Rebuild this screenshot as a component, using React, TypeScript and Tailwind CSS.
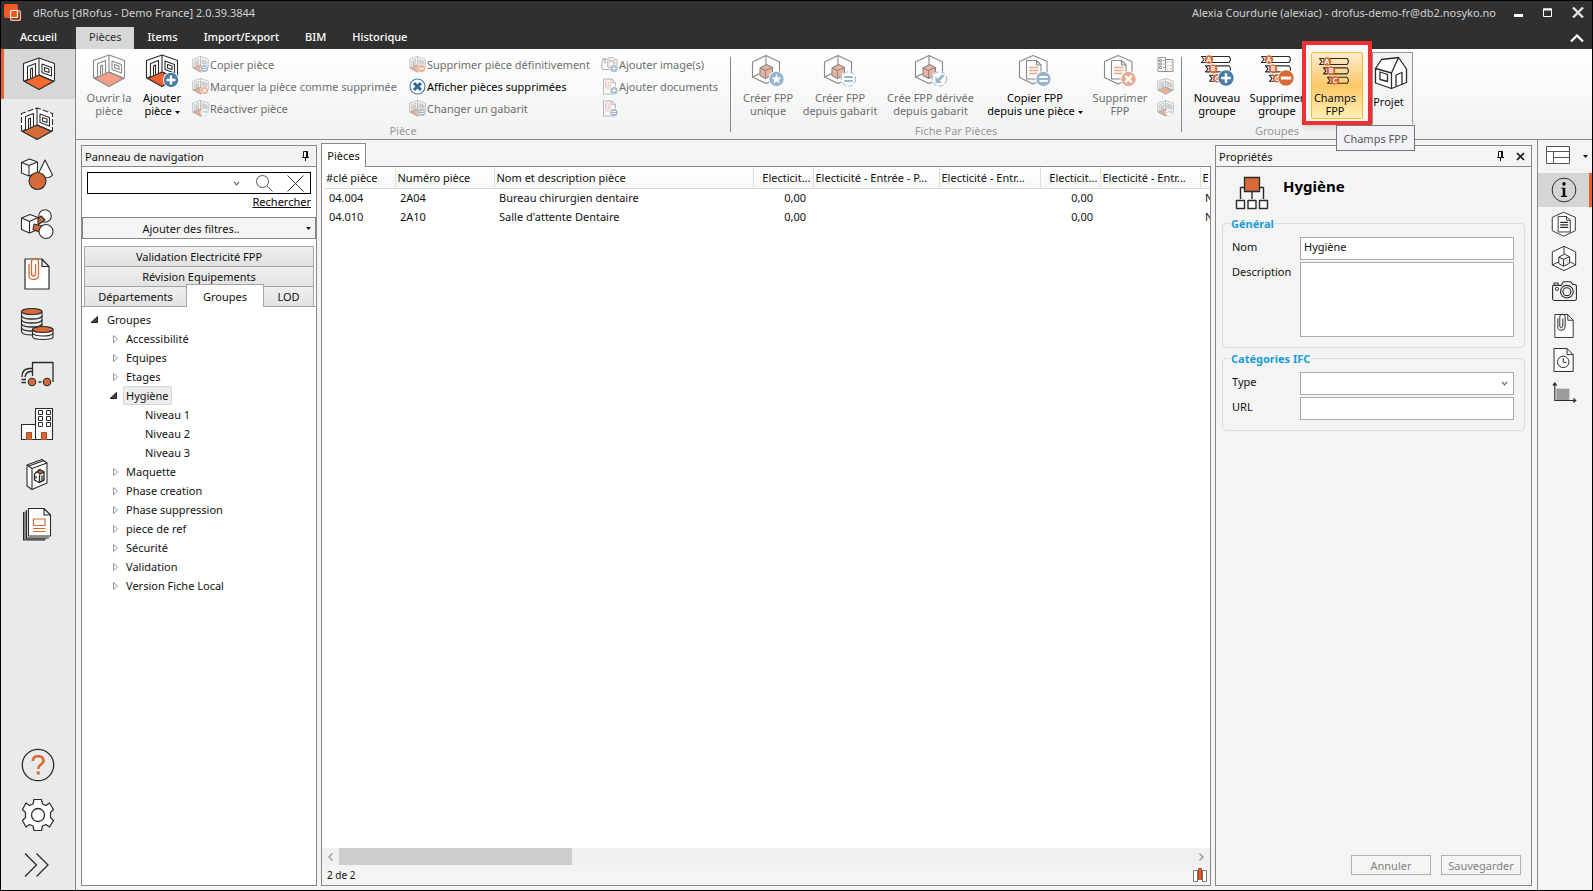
import { useState } from 'react';
import type { ReactNode } from 'react';
import clsx from 'clsx';

const ORANGE = '#d66a38';
const BLUE = '#4a7ba7';
const INK = '#2b2b2b';

type BadgeKind = 'plus' | 'minus' | 'x' | 'star' | 'equal' | 'equalOutline' | 'arrow' | 'refresh' | 'swap';

/* ---------- icons ---------- */

function Badge({ kind, cx = 24, cy = 24, r = 7.5 }: { kind: BadgeKind; cx?: number; cy?: number; r?: number }) {
  const outline = kind === 'equalOutline' || kind === 'arrow' || kind === 'refresh';
  const fill = kind === 'minus' || kind === 'x' ? ORANGE : BLUE;
  const mark = outline ? BLUE : '#fff';
  return (
    <g transform={`translate(${cx} ${cy}) scale(${r / 7.5})`} strokeLinecap="butt">
      <circle r="8" fill="#fff" stroke="none" />
      <circle r="7.2" fill={outline ? '#fff' : fill} stroke={outline ? BLUE : 'none'} strokeWidth="1" strokeDasharray={outline ? '5 2' : undefined} />
      {kind === 'plus' && <path d="M-4.5 0H4.5M0-4.5V4.5" stroke={mark} strokeWidth="2.4" />}
      {kind === 'minus' && <path d="M-4.8 0H4.8" stroke={mark} strokeWidth="2.8" />}
      {kind === 'x' && <path d="M-3.3-3.3L3.3 3.3M3.3-3.3L-3.3 3.3" stroke={mark} strokeWidth="2.4" />}
      {kind === 'star' && <path d="M0-5L1.4-1.6 5-1.4 2.2 .9 3.1 4.4 0 2.4-3.1 4.4-2.2 .9-5-1.4-1.4-1.6Z" fill={mark} stroke="none" />}
      {(kind === 'equal' || kind === 'equalOutline') && <path d="M-4.2-2H4.2M-4.2 2H4.2" stroke={mark} strokeWidth="2" />}
      {kind === 'arrow' && <><path d="M4-4L-1 1" stroke={mark} strokeWidth="3" /><path d="M-4-2.5V4H2.5Z" fill={mark} stroke="none" /></>}
      {kind === 'refresh' && <path d="M-4 1C-3-4 3-4 4 0M1 0H4.500V-3.500" stroke={mark} strokeWidth="1.6" fill="none" />}
      {kind === 'swap' && <path d="M-5-2H4M1-4.500 4-2M5 2H-4M-1 4.500L-4 2" stroke={mark} strokeWidth="1.5" fill="none" />}
    </g>
  );
}

function Svg({ size = 34, box = 34, className, children }: { size?: number; box?: number; className?: string; children: ReactNode }) {
  return (
    <svg width={size} height={size} viewBox={`0 0 ${box} ${box}`} fill="none" stroke={INK} strokeWidth="1.1" strokeLinejoin="round" aria-hidden="true" className={clsx('shrink-0', className)}>
      {children}
    </svg>
  );
}

function RoomIcon({ size = 34, badge, floor = ORANGE, dashed }: { size?: number; badge?: BadgeKind; floor?: string; dashed?: boolean }) {
  return (
    <Svg size={size}>
      <path d="M17 1L32.500 6.500V24L17 33 1.500 24V6.500Z" fill="#fff" stroke="none" />
      <path d="M17 18L31.500 24.500 17 32.500 2.500 24.500Z" fill={floor} />
      <path d="M1.500 24V6.500L17 1 32.500 6.500V24" strokeDasharray={dashed ? '6 2' : undefined} />
      <path d="M17 1V18M1.500 24.500L5.500 22.500V9.500L13.500 6.500V19.500M8.500 21.500V12L10.500 11V20.500M20 7L29.500 10.500V19L20 15.500ZM22.500 10.500L27 12V15.500L22.500 14ZM17 18L32.500 24.500" />
      {badge && <Badge kind={badge} cx={size < 20 ? 25 : 26} cy={size < 20 ? 25 : 26} />}
    </Svg>
  );
}

function HexCubeIcon({ badge, size = 34, fill = '#dd7a55' }: { badge?: BadgeKind; size?: number; fill?: string }) {
  return (
    <Svg size={size} box={badge ? 34 : 30}>
      <path d="M15 1.500L28.500 8V23L15 29.500 1.500 23V8Z" fill="#fff" />
      <path d="M15 1.500V11M1.500 23L9 19.500M28.500 23L22 19.500" />
      <path d="M9 14L15.500 10.500 21.500 13.500V21L14.500 24.500 9 21.500Z" fill={fill} />
      <path d="M9 14L14.500 16.500 21.500 13.500M14.500 16.500V24.500" />
      {badge && <Badge kind={badge} cx={25.5} cy={25} />}
    </Svg>
  );
}

function HexDocIcon({ badge, size = 34, lines = ORANGE }: { badge?: BadgeKind; size?: number; lines?: string }) {
  return (
    <Svg size={size} box={badge ? 34 : 31}>
      <path d="M15 1.500L29 7.500V23.500L15 30 1.500 23.500V7.500Z" fill="#fff" />
      <path d="M8.500 6.500H18.500L23 11V25H8.500ZM18.500 6.500V11H23" fill="#fff" />
      <path d="M11 13.500H20.500M11 16.500H20.500M11 19.500H20.500" stroke={lines} strokeWidth="1.4" />
      {badge && <Badge kind={badge} cx={25.5} cy={25} />}
    </Svg>
  );
}

function FieldsIcon({ badge }: { badge?: BadgeKind }) {
  return (
    <Svg>
      {['A', 'B', 'C'].map((letter, i) => (
        <g key={letter} transform={`translate(${i * 4} ${i * 9.4})`}>
          <path d="M6 2.500H1.500L4 5.500 1.500 8.500H6" />
          <path d={`M11 2.500H${29 - i * 4}Q${32 - i * 4} 5.500 ${29 - i * 4} 8.500H11`} />
          <circle cx="9" cy="5.500" r="4.300" fill={ORANGE} stroke="none" />
          <text x="9" y="8" fontSize="7" fontWeight="bold" textAnchor="middle" fill="#fff" stroke="none">{letter}</text>
        </g>
      ))}
      {badge && <Badge kind={badge} cx={26} cy={24} r={8} />}
    </Svg>
  );
}

function HouseIcon() {
  return (
    <Svg>
      <path d="M1.500 12.500L7.500 3.500 24.500 1.500 32.500 13V26.500L17.500 32.500 1.500 27Z" fill="#fff" strokeWidth="1.300" />
      <path d="M1.500 12.500L17.500 17 24.500 1.500M17.500 17V32.500M6 16L13.500 18.500V25.500L6 23.500ZM22 30.500V19L28 16.500V28.500" strokeWidth="1.300" />
    </Svg>
  );
}

function PaperclipDoc({ size = 34, clip = ORANGE, badge }: { size?: number; clip?: string; badge?: BadgeKind }) {
  return (
    <Svg size={size}>
      <path d="M5 2H22L29 9.500V32H5ZM22 2V9.500H29" fill="#fff" strokeWidth="1.2" />
      <path d="M15.500 7V17Q15.500 19 13.500 19T11.500 17V5Q11.500 1.500 15 1.500T18.500 5V18Q18.500 22.500 13.500 22.500T9 18V7" stroke={clip} strokeWidth="1.3" />
      {badge && <Badge kind={badge} cx={26} cy={25} />}
    </Svg>
  );
}

function CameraIcon({ size = 28, badge }: { size?: number; badge?: BadgeKind }) {
  return (
    <Svg size={size}>
      <path d="M3 8H13L15.500 3.500H25L27.500 7H30Q32 7 32 9V25Q32 27 30 27H4Q2 27 2 25V10Q2 8 3 8ZM4 8V5H9V8" fill={badge ? '#fff' : 'none'} strokeWidth="1.4" />
      <circle cx="20" cy="16" r="8" strokeWidth="1.400" />
      <circle cx="20" cy="16" r="5" strokeWidth="1.400" stroke={badge ? ORANGE : INK} />
      <circle cx="7.500" cy="12.500" r="2" />
      {badge && <Badge kind={badge} cx={26} cy={25} />}
    </Svg>
  );
}

function HiddenRoomsIcon() {
  return (
    <Svg size={17}>
      <circle cx="17" cy="17" r="15" fill="#fff" stroke={BLUE} strokeWidth="2.4" />
      <path d="M10 10L24 24M24 10L10 24" stroke="#2f6797" strokeWidth="6" />
    </Svg>
  );
}

function CompareIcon() {
  return (
    <Svg size={17}>
      <path d="M2 3H17V31H2ZM17 7H32V31H17Z" fill="#fff" strokeWidth="2" />
      <path d="M5 7H9V11H5ZM5 14H9V18H5ZM5 21H9V25H5ZM12 9H15M12 16H15M12 23H15" strokeWidth="2" />
      <path d="M20 12H23M26 12H30M20 19H23M26 19H30M20 26H23M26 26H30" stroke={ORANGE} strokeWidth="2.500" />
    </Svg>
  );
}

const Caret = () => (
  <svg width="5" height="3" viewBox="0 0 5 3" aria-hidden="true" className="inline-block shrink-0 align-middle"><path d="M0 0H5L2.500 3Z" fill="#111" /></svg>
);

const Chevron = () => (
  <svg width="7" height="5" viewBox="0 0 7 5" fill="none" stroke="#666" strokeWidth="1.200" aria-hidden="true"><path d="M1 .8L3.500 3.800 6 .8" /></svg>
);

const PinIcon = () => (
  <svg width="7" height="10" viewBox="0 0 7 10" fill="none" stroke="#111" aria-hidden="true"><path d="M1.500 6.500V.5H5.500V6.500M0 6.500H7M3.500 7V10" /><path d="M5 .5V6.500" strokeWidth="2" /></svg>
);

const CloseIcon = () => (
  <svg width="9" height="9" viewBox="0 0 9 9" stroke="#111" strokeWidth="1.700" aria-hidden="true"><path d="M1 1L8 8M8 1L1 8" /></svg>
);

/* ---------- left bar ---------- */

const modules: { label: string; icon: ReactNode }[] = [
  { label: 'Pièces', icon: <RoomIcon floor="#f4692f" /> },
  { label: 'Gabarits', icon: <RoomIcon dashed /> },
  {
    label: 'Items',
    icon: (
      <Svg>
        <path d="M1.500 5.500L9.500 2 17.500 5V15.500L9 19 1.500 16ZM1.500 5.500L9 8.500 17.500 5M9 8.500V19" fill="#fff" />
        <path d="M25 3L17.500 18.500Q19 21.500 25 21T32.500 18Z" fill="#fff" />
        <circle cx="17.500" cy="24" r="8.500" fill={ORANGE} />
      </Svg>
    ),
  },
  {
    label: 'Systèmes',
    icon: (
      <Svg>
        <circle cx="25" cy="9" r="6.300" fill="#fff" />
        <path d="M14 15L21 9 25 13 16 19Z" fill={ORANGE} />
        <path d="M1.500 11L10 7.500 18 10.500V22.500L9.500 26 1.500 22.500ZM1.500 11L9.500 14.500 18 10.500M9.500 14.500V26" fill="#fff" />
        <path d="M14 17L22 19 20.500 25.500 13 22.500Z" fill={ORANGE} />
        <circle cx="26" cy="24.500" r="7" fill="#fff" />
      </Svg>
    ),
  },
  { label: 'Documents', icon: <PaperclipDoc /> },
  {
    label: 'Finances',
    icon: (
      <Svg>
        <path d="M1.500 4.500V24.500Q1.500 28 12 28T22 24.500V4.500" fill="#e8ebea" />
        <path d="M1.500 9Q3 12 12 12T22 9M1.500 13Q3 16 12 16T22 13M1.500 17Q3 20 12 20T22 17M1.500 21Q3 24 12 24T22 21" strokeWidth="1.300" />
        <ellipse cx="11.750" cy="4.500" rx="10.250" ry="3" fill={ORANGE} />
        <path d="M12.500 22.500V29.500Q12.500 32.500 23 32.500T33 29.500V22.500" fill="#fff" />
        <path d="M12.500 26Q14 29 23 29T33 26" />
        <ellipse cx="22.750" cy="22.500" rx="10.250" ry="3" fill={ORANGE} />
      </Svg>
    ),
  },
  {
    label: 'Logistique',
    icon: (
      <Svg>
        <path d="M12.500 19V5.500H33V25M12.500 11.500H9Q2 12 2 20M12.500 14.500H10Q6 15 5 20M1.500 22.500H6M1.500 25.500H6M18.500 25H21.500" strokeWidth="1.300" />
        <circle cx="12" cy="25" r="3.700" fill={ORANGE} />
        <circle cx="27" cy="25" r="3.700" fill={ORANGE} />
      </Svg>
    ),
  },
  {
    label: 'Bâtiments',
    icon: (
      <Svg>
        <path d="M1.500 17.500H15.500V32.500H1.500ZM15.500 1.500H32.500V32.500H15.500Z" fill="#fff" />
        <path d="M18.500 3.500H22.500V7.500H18.500ZM26.500 3.500H30.500V7.500H26.500ZM18.500 9.500H22.500V13.500H18.500ZM26.500 9.500H30.500V13.500H26.500ZM18.500 15.500H22.500V19.500H18.500ZM26.500 15.500H30.500V19.500H26.500Z" strokeWidth="1" />
        <path d="M6.500 32.500V25.500H11.500V32.500ZM21.500 32.500V25.500H26.500V32.500Z" fill={ORANGE} stroke="#b04f22" />
      </Svg>
    ),
  },
  {
    label: 'Catalogue',
    icon: (
      <Svg>
        <path d="M7 8L22 2.500 27 6V26L12 32.500 7 29Z" fill="#fff" />
        <path d="M7 8L12 11.500 27 6M12 11.500V32.500M9 9L24 3.500" />
        <path d="M14.500 17L19 13 24 15V23L19 25.500 14.500 23Z" fill="#fff" strokeWidth="1.400" />
        <path d="M17 15L20 12.500 24 15 20.500 17Z" fill={ORANGE} />
        <path d="M19.500 17.500V25M16 19V21.500M22 18.500V23" strokeWidth="1.300" />
      </Svg>
    ),
  },
  {
    label: 'Rapports',
    icon: (
      <Svg>
        <path d="M5 4.500V32H26" stroke="#888" strokeWidth="2" />
        <path d="M6.500 3V31H29M3.500 5V33H25" />
        <path d="M8.500 1.500H24L30.500 8V29H8.500ZM24 1.500V8H30.500" fill="#fff" />
        <path d="M13.500 12H25V18.500H13.500ZM13 21.500H25.500M13 24.500H25.500" stroke={ORANGE} strokeWidth="1.200" />
      </Svg>
    ),
  },
];

const tools: { label: string; icon: ReactNode }[] = [
  {
    label: 'Aide',
    icon: (
      <Svg>
        <circle cx="17" cy="17" r="15.700" strokeWidth="1.300" />
        <path d="M11.800 13C11.800 9.500 14 8.200 17 8.200S22.500 9.500 22.500 12.700C22.500 16.500 17.200 16.200 17.200 21" stroke={ORANGE} strokeWidth="2.600" />
        <path d="M15.700 23.500H18.700V26.500H15.700Z" fill={ORANGE} stroke="none" />
      </Svg>
    ),
  },
  {
    label: 'Paramètres',
    icon: (
      <Svg>
        <path d="M13 1.500H20.500L21.500 6 25 7.500 28.500 5 32.500 11.500 29.500 14.500V19.500L32.500 22.500 28.500 29 25 26.500 21.500 28 20.500 32.500H13L12 28 8.500 26.500 5 29 1.500 22.500 4.500 19.500V14.500L1.500 11.500 5 5 8.500 7.500 12 6Z" fill="#fff" strokeWidth="1.200" />
        <circle cx="17" cy="17" r="6.500" strokeWidth="1.300" />
      </Svg>
    ),
  },
  {
    label: 'Développer',
    icon: (
      <Svg>
        <path d="M4 5.500L15.500 17 4 28.500M15.500 5.500L27 17 15.500 28.500" strokeWidth="1.300" strokeLinejoin="miter" />
      </Svg>
    ),
  },
];

function SideBar() {
  const [active, setActive] = useState(0);
  return (
    <nav className="flex w-[75px] shrink-0 flex-col border-r border-[#878787] bg-[#e8ebea]">
      {modules.map((m, i) => (
        <button key={m.label} aria-label={m.label} onClick={() => setActive(i)} className={clsx('flex h-[50px] shrink-0 items-center justify-center border-l-3', i === active ? 'border-[#e8612f] bg-[#d6d8d7] pr-0.5' : 'border-transparent pr-1.5')}>
          {m.icon}
        </button>
      ))}
      <div className="flex-1" />
      {tools.map(t => (
        <button key={t.label} aria-label={t.label} className="flex h-[50px] shrink-0 items-center justify-center">{t.icon}</button>
      ))}
    </nav>
  );
}

/* ---------- ribbon ---------- */

function LargeButton({ icon, lines, width, disabled, menu, faded }: { icon: ReactNode; lines: [string, string]; width: string; disabled?: boolean; menu?: boolean; faded?: boolean }) {
  return (
    <button disabled={disabled} className={clsx('flex shrink-0 flex-col items-center pt-[5px] leading-[13px] whitespace-nowrap', width, disabled ? 'text-[#6d6d6d]' : 'text-black')}>
      <span className={clsx('mb-[3px]', (disabled || faded) && 'opacity-55')}>{icon}</span>
      <span>{lines[0]}</span>
      <span>{lines[1]}{menu && <> <Caret /></>}</span>
    </button>
  );
}

function SmallButton({ icon, label, enabled, hint }: { icon: ReactNode; label?: string; enabled?: boolean; hint?: string }) {
  return (
    <button disabled={!enabled} aria-label={hint} className={clsx('flex h-[22px] items-center gap-px whitespace-nowrap', enabled ? 'text-black' : 'text-[#6d6d6d]')}>
      <span className={clsx(!enabled && 'opacity-50')}>{icon}</span>
      {label}
    </button>
  );
}

function RibbonGroup({ label, width, children }: { label: string; width: string; children: ReactNode }) {
  return (
    <section className={clsx('flex shrink-0 flex-col', width)}>
      <div className="flex h-[74px]">{children}</div>
      <div className="text-center text-[#999]">{label}</div>
    </section>
  );
}

const Divider = () => <div className="mt-2 h-[75px] w-px shrink-0 bg-[#878787]" />;

function Ribbon() {
  return (
    <div className="flex h-[91px] shrink-0 border-b border-[#878787] bg-linear-to-b from-white to-[#f0f1f1]">
      <RibbonGroup label="Pièce" width="w-[654px]">
        <LargeButton disabled icon={<RoomIcon floor="#f0552a" />} lines={['Ouvrir la', 'pièce']} width="ml-[6px] w-[54px]" />
        <LargeButton icon={<RoomIcon floor="#e8612f" badge="plus" />} lines={['Ajouter', 'pièce']} width="w-[52px]" menu />
        <div className="mt-1 ml-1 grid grid-cols-[217px_192px_124px] content-start">
          <SmallButton icon={<RoomIcon size={17} badge="equal" />} label="Copier pièce" />
          <SmallButton icon={<RoomIcon size={17} badge="minus" />} label="Supprimer pièce définitivement" />
          <SmallButton icon={<CameraIcon size={17} badge="plus" />} label="Ajouter image(s)" />
          <SmallButton icon={<RoomIcon size={17} badge="x" />} label="Marquer la pièce comme supprimée" />
          <SmallButton icon={<HiddenRoomsIcon />} label="Afficher pièces supprimées" enabled />
          <SmallButton icon={<PaperclipDoc size={17} badge="plus" />} label="Ajouter documents" />
          <SmallButton icon={<RoomIcon size={17} badge="refresh" />} label="Réactiver pièce" />
          <SmallButton icon={<RoomIcon size={17} badge="swap" />} label="Changer un gabarit" />
          <SmallButton icon={<PaperclipDoc size={17} badge="equal" />} hint="Lier un document" />
        </div>
      </RibbonGroup>
      <Divider />
      <RibbonGroup label="Fiche Par Pièces" width="w-[450px]">
        <LargeButton disabled icon={<HexCubeIcon badge="star" />} lines={['Créer FPP', 'unique']} width="ml-[6px] w-[62px]" />
        <LargeButton disabled icon={<HexCubeIcon badge="equalOutline" />} lines={['Créer FPP', 'depuis gabarit']} width="w-[82px]" />
        <LargeButton disabled icon={<HexCubeIcon badge="arrow" />} lines={['Crée FPP dérivée', 'depuis gabarit']} width="w-[99px]" />
        <LargeButton faded menu icon={<HexDocIcon badge="equal" />} lines={['Copier FPP', 'depuis une pièce']} width="w-[110px]" />
        <LargeButton disabled icon={<HexDocIcon badge="x" />} lines={['Supprimer', 'FPP']} width="w-[60px]" />
        <div className="mt-1 ml-[7px] flex flex-col">
          <SmallButton icon={<CompareIcon />} hint="Comparer" />
          <SmallButton icon={<RoomIcon size={17} />} hint="Afficher la pièce" />
          <SmallButton icon={<RoomIcon size={17} badge="refresh" />} hint="Actualiser" />
        </div>
      </RibbonGroup>
      <Divider />
      <RibbonGroup label="Groupes" width="w-[190px]">
        <LargeButton icon={<FieldsIcon badge="plus" />} lines={['Nouveau', 'groupe']} width="ml-[6px] w-[58px]" />
        <LargeButton icon={<FieldsIcon badge="minus" />} lines={['Supprimer', 'groupe']} width="w-[62px]" />
        <div className="relative mt-[3px] ml-[3px] h-[67px] w-[52px] shrink-0">
          <span className="absolute -inset-x-[9px] -top-[11px] -bottom-[6px] border-4 border-[#ee3035] bg-[#f7f7f7] shadow-md" />
          <button className="relative flex size-full flex-col items-center rounded-xs border border-[#f5bd2c] bg-linear-to-b from-[#fdebcf] from-0% via-[#fdc765] via-50% to-[#fff0b4] pt-[3px] pr-1 leading-[13px]">
            <span className="mb-px"><FieldsIcon /></span>
            <span>Champs</span>
            <span>FPP</span>
          </button>
          <span role="tooltip" className="absolute top-[73px] left-[25px] z-10 flex h-[26px] w-[79px] items-center justify-center border border-[#767676] bg-[#f1f2f7] whitespace-nowrap text-[#575757]">
            Champs FPP
          </span>
        </div>
      </RibbonGroup>
      <button className="mt-[3px] flex h-[72px] w-[41px] shrink-0 flex-col items-center border border-b-0 border-[#999] bg-[#f3f4f4] pt-[3px] pr-1">
        <HouseIcon />
        <span className="mt-1 pr-1">Projet</span>
      </button>
    </div>
  );
}

/* ---------- navigation panel ---------- */

interface TreeNode { name: string; level: number; state: 'open' | 'closed' | 'leaf' }

const tree: TreeNode[] = [
  { name: 'Groupes', level: 0, state: 'open' },
  { name: 'Accessibilité', level: 1, state: 'closed' },
  { name: 'Equipes', level: 1, state: 'closed' },
  { name: 'Etages', level: 1, state: 'closed' },
  { name: 'Hygiène', level: 1, state: 'open' },
  { name: 'Niveau 1', level: 2, state: 'leaf' },
  { name: 'Niveau 2', level: 2, state: 'leaf' },
  { name: 'Niveau 3', level: 2, state: 'leaf' },
  { name: 'Maquette', level: 1, state: 'closed' },
  { name: 'Phase creation', level: 1, state: 'closed' },
  { name: 'Phase suppression', level: 1, state: 'closed' },
  { name: 'piece de ref', level: 1, state: 'closed' },
  { name: 'Sécurité', level: 1, state: 'closed' },
  { name: 'Validation', level: 1, state: 'closed' },
  { name: 'Version Fiche Local', level: 1, state: 'closed' },
];

const indents = ['pl-[7px]', 'pl-[26px]', 'pl-[45px]'];

function NavigationPanel() {
  const [selected, setSelected] = useState('Hygiène');
  return (
    <aside className="mt-[5px] flex w-[236px] shrink-0 flex-col border border-[#878787] bg-white">
      <header className="flex h-[21px] shrink-0 items-center justify-between border-b border-[#878787] bg-[#f2f2f2] pr-[7px] pl-[3px]">
        <h2>Panneau de navigation</h2>
        <button aria-label="Épingler"><PinIcon /></button>
      </header>
      <div className="mx-[5px] mt-[5px] flex h-[22px] shrink-0 items-center border border-black">
        <input aria-label="Recherche" className="h-full min-w-0 flex-1 px-1 outline-none" />
        <button aria-label="Historique de recherche" className="mr-4"><Chevron /></button>
        <button aria-label="Chercher" className="mr-[14px]">
          <svg width="17" height="17" viewBox="0 0 17 17" fill="none" stroke="#555"><circle cx="6.500" cy="6.500" r="6" /><path d="M11 11L16.500 16.500" /></svg>
        </button>
        <button aria-label="Effacer" className="mr-[6px]">
          <svg width="17" height="17" viewBox="0 0 17 17" stroke="#333"><path d="M.5 .5L16.500 16.500M16.500 .5L.5 16.500" /></svg>
        </button>
      </div>
      <a href="#rechercher" className="mr-[5px] self-end text-black underline">Rechercher</a>
      <button className="mt-2 flex h-[22px] shrink-0 items-center border border-[#878787] bg-[#f4f4f4] pr-1">
        <span className="flex-1 pr-[7px]">Ajouter des filtres..</span>
        <Caret />
      </button>
      <div role="tablist" className="mt-[7px] shrink-0 border-b border-[#a5a5a5] px-[2px]">
        <button role="tab" aria-selected="false" className="block h-5 w-full border border-b-0 border-[#a5a5a5] bg-linear-to-b from-[#efefef] to-[#e2e2e2]">Validation Electricité FPP</button>
        <button role="tab" aria-selected="false" className="block h-5 w-full border border-b-0 border-[#a5a5a5] bg-linear-to-b from-[#efefef] to-[#e2e2e2]">Révision Equipements</button>
        <div className="-mb-px flex h-[21px] items-end">
          <button role="tab" aria-selected="false" className="h-[21px] flex-1 border border-[#a5a5a5] bg-linear-to-b from-[#efefef] to-[#e2e2e2]">Départements</button>
          <button role="tab" aria-selected="true" className="z-10 -mx-px h-[23px] w-[78px] shrink-0 border border-b-0 border-[#a5a5a5] bg-white">Groupes</button>
          <button role="tab" aria-selected="false" className="h-[21px] w-[51px] shrink-0 border border-[#a5a5a5] bg-linear-to-b from-[#efefef] to-[#e2e2e2]">LOD</button>
        </div>
      </div>
      <ul role="tree" className="mt-[3px] min-h-0 flex-1 overflow-hidden">
        {tree.map(node => (
          <li key={node.name} role="treeitem" aria-selected={node.name === selected} className={clsx('flex h-[19px] items-center', indents[node.level])}>
            <svg width="12" height="8" viewBox="0 0 12 8" aria-hidden="true" className="shrink-0">
              {node.state === 'open' && <path d="M8.500 .5V6.500H2Z" fill="#444" stroke="#222" />}
              {node.state === 'closed' && <path d="M5.500 .5V7.500L9.500 4Z" fill="#fff" stroke="#999" />}
            </svg>
            <button onClick={() => setSelected(node.name)} className={clsx('ml-[3px] rounded-xs border px-[2px] leading-[17px]', node.name === selected ? 'border-[#d5d5d5] bg-[#eee]' : 'border-transparent')}>
              {node.name}
            </button>
          </li>
        ))}
      </ul>
    </aside>
  );
}

/* ---------- rooms table ---------- */

const columns: { title: string; width: string; numeric?: boolean }[] = [
  { title: '#clé pièce', width: 'w-[71px]' },
  { title: 'Numéro pièce', width: 'w-[99px]' },
  { title: 'Nom et description pièce', width: 'w-[259px]' },
  { title: 'Electicit...', width: 'w-[60px]', numeric: true },
  { title: 'Electicité - Entrée - P...', width: 'w-[126px]' },
  { title: 'Electicité - Entr...', width: 'w-[101px]' },
  { title: 'Electicit...', width: 'w-[60px]', numeric: true },
  { title: 'Electicité - Entr...', width: 'w-[100px]' },
  { title: 'E', width: '' },
];

const rooms = [
  ['04.004', '2A04', 'Bureau chirurgien dentaire', '0,00', '', '', '0,00', '', 'N'],
  ['04.010', '2A10', "Salle d'attente Dentaire", '0,00', '', '', '0,00', '', 'N'],
];

function RoomsPanel() {
  return (
    <main className="flex min-w-0 flex-1 flex-col pt-[3px]">
      <div role="tablist" className="flex">
        <button role="tab" aria-selected="true" className="relative z-10 -mb-px h-[24px] w-[45px] border border-b-0 border-[#878787] bg-white">Pièces</button>
      </div>
      <div className="flex min-h-0 flex-1 flex-col border border-[#878787] bg-white">
        <div className="min-h-0 flex-1 overflow-hidden pl-[2px]">
          <table className="w-full table-fixed border-collapse whitespace-nowrap">
            <thead>
              <tr className="h-[21px] border-b border-[#d5d5d5] bg-linear-to-b from-white to-[#f7f8f8]">
                {columns.map((c, i) => (
                  <th key={i} className={clsx('overflow-hidden border-r border-[#dedede] px-[2px] font-normal last:border-r-0', c.width, c.numeric ? 'text-right' : 'text-left')}>{c.title}</th>
                ))}
              </tr>
            </thead>
            <tbody>
              {rooms.map(row => (
                <tr key={row[0]} className="h-[19px]">
                  {row.map((cell, i) => (
                    <td key={i} className={clsx('overflow-hidden', columns[i].numeric ? 'pr-[7px] text-right' : 'pl-[5px]')}>{cell}</td>
                  ))}
                </tr>
              ))}
            </tbody>
          </table>
        </div>
        <div className="flex h-[17px] shrink-0 items-center bg-[#f0f0f0]">
          <button aria-label="Défiler à gauche" className="flex w-[17px] justify-center">
            <svg width="5" height="8" viewBox="0 0 5 8" fill="none" stroke="#999" strokeWidth="1.400"><path d="M4.500 .5L1 4 4.500 7.500" /></svg>
          </button>
          <div className="h-full flex-1"><div className="h-full w-3/11 bg-[#cdcdcd]" /></div>
          <button aria-label="Défiler à droite" className="flex w-[17px] justify-center">
            <svg width="5" height="8" viewBox="0 0 5 8" fill="none" stroke="#999" strokeWidth="1.400"><path d="M.5 .5L4 4 .5 7.500" /></svg>
          </button>
        </div>
        <footer className="flex h-[20px] shrink-0 items-center justify-between bg-[#f4f4f4] pr-[3px] pl-[5px] text-[10px]">
          <span>2 de 2</span>
          <svg width="14" height="15" viewBox="0 0 14 15" fill="#fff" stroke="#777" aria-hidden="true">
            <path d="M.5 2.500H4.500V13.500H.5ZM9.500 2.500H13.500V13.500H9.500Z" />
            <path d="M5.500 .5H8.500V11.500H5.500Z" fill="#f4592a" stroke="#b5401c" />
          </svg>
        </footer>
      </div>
    </main>
  );
}

/* ---------- properties ---------- */

function PropertiesPanel() {
  const [name, setName] = useState('Hygiène');
  const field = 'border border-[#ababab] bg-white px-[3px] outline-none';
  const group = 'mx-[6px] rounded border border-[#d3dde6] pr-[10px] pl-[9px] pb-[10px]';
  return (
    <aside className="mt-[5px] flex w-[317px] shrink-0 flex-col border border-[#878787] bg-[#f4f4f4]">
      <header className="flex h-[21px] shrink-0 items-center border-b border-[#878787] pr-[6px] pl-[3px]">
        <h2 className="flex-1">Propriétés</h2>
        <button aria-label="Épingler" className="mr-[12px]"><PinIcon /></button>
        <button aria-label="Fermer"><CloseIcon /></button>
      </header>
      <div className="flex px-[19px] pt-[9px]">
        <Svg>
          <path d="M17 15V23M5.500 23V11.500H28.500V23" strokeWidth="1.400" />
          <path d="M9.500 1.500H24.500V15.500H9.500Z" fill={ORANGE} strokeWidth="1.300" />
          <path d="M1.500 24.500H9.500V32.500H1.500ZM13 24.500H21V32.500H13ZM24.500 24.500H32.500V32.500H24.500Z" fill="#fff" strokeWidth="1.400" />
        </Svg>
        <h1 className="ml-[14px] text-[15px] leading-5 font-bold text-black">Hygiène</h1>
      </div>
      <fieldset className={clsx(group, 'mt-[6px]')}>
        <legend className="-ml-[2px] px-[1px] font-bold text-[#1b9cd8]">Général</legend>
        <div className="mt-[6px] grid grid-cols-[68px_1fr] gap-y-[2px]">
          <label htmlFor="nom" className="pt-[2px]">Nom</label>
          <input id="nom" value={name} onChange={e => setName(e.target.value)} className={clsx(field, 'h-[23px] pb-1')} />
          <label htmlFor="description" className="pt-[2px]">Description</label>
          <textarea id="description" className={clsx(field, 'h-[75px] resize-none')} />
        </div>
      </fieldset>
      <fieldset className={clsx(group, 'mt-[3px]')}>
        <legend className="-ml-[2px] px-[1px] font-bold text-[#1b9cd8]">Catégories IFC</legend>
        <div className="mt-[6px] grid grid-cols-[68px_1fr] gap-y-[2px]">
          <label htmlFor="type" className="pt-[2px]">Type</label>
          <div className="relative">
            <select id="type" className={clsx(field, 'block h-[23px] w-full appearance-none')}><option></option></select>
            <span className="pointer-events-none absolute top-[9px] right-[6px]"><Chevron /></span>
          </div>
          <label htmlFor="url" className="pt-[2px]">URL</label>
          <input id="url" className={clsx(field, 'h-[23px]')} />
        </div>
      </fieldset>
      <div className="mt-auto mr-[10px] mb-[10px] flex justify-end gap-[10px] text-[#838383]">
        <button disabled className="h-5 w-20 border border-[#adb2b5]">Annuler</button>
        <button disabled className="h-5 w-20 border border-[#adb2b5]">Sauvegarder</button>
      </div>
    </aside>
  );
}

/* ---------- right strip ---------- */

const views: { label: string; icon: ReactNode }[] = [
  {
    label: 'Informations',
    icon: (
      <Svg size={26}>
        <circle cx="17" cy="17" r="15.500" strokeWidth="1.300" />
        <circle cx="17" cy="9" r="2.300" fill="#111" stroke="none" />
        <path d="M13.500 14H18.700V24.500H21V26H13V24.500H15.300V15.500H13.500Z" fill="#111" stroke="none" />
      </Svg>
    ),
  },
  { label: 'Fiche', icon: <HexDocIcon size={26} lines={INK} /> },
  { label: 'Items', icon: <HexCubeIcon size={26} fill="#f4f4f4" /> },
  { label: 'Images', icon: <CameraIcon size={27} /> },
  { label: 'Documents', icon: <PaperclipDoc size={26} clip={INK} /> },
  {
    label: 'Historique',
    icon: (
      <Svg size={26}>
        <path d="M4 2H21L29 10V32H4ZM21 2V10H29" fill="#fff" strokeWidth="1.300" />
        <circle cx="16" cy="19.500" r="7.500" strokeWidth="1.300" />
        <path d="M16 14.500V20H20.500" strokeWidth="1.300" />
      </Svg>
    ),
  },
  {
    label: 'Dimensions',
    icon: (
      <Svg size={26}>
        <path d="M7 10H24V25H7Z" fill="#9a9c9c" stroke="none" />
        <path d="M5 3V25.500H32M2.500 6L5 2.500 7.500 6M29 23L32.500 25.500 29 28" strokeWidth="1.500" />
      </Svg>
    ),
  },
];

function ViewStrip() {
  const [active, setActive] = useState(0);
  return (
    <nav className="ml-[5px] flex w-[55px] shrink-0 flex-col border-l border-[#878787] bg-[#f4f4f4]">
      <button aria-label="Disposition" className="flex h-[33px] shrink-0 items-center justify-between pr-[4px] pl-2">
        <svg width="24" height="18" viewBox="0 0 24 18" fill="#fff" stroke="#555" aria-hidden="true" className="-mt-1"><path d="M.5 .5H23.500V17.500H.5ZM.5 5.500H23.500M7.500 5.500V17.500M7.500 11.500H23.500" /></svg>
        <Caret />
      </button>
      {views.map((v, i) => (
        <button key={v.label} aria-label={v.label} onClick={() => setActive(i)} className={clsx('flex h-[34px] shrink-0 items-center justify-center border-r-3 pl-px', i === active ? 'border-[#e8612f] bg-[#d4d6d5]' : 'border-transparent')}>
          {v.icon}
        </button>
      ))}
    </nav>
  );
}

/* ---------- window ---------- */

const menus = ['Accueil', 'Pièces', 'Items', 'Import/Export', 'BIM', 'Historique'];

export default function App() {
  return (
    <div className="flex h-screen flex-col overflow-hidden border border-black bg-[#f4f4f4] font-['Noto_Sans','Open_Sans',sans-serif] text-[11px] leading-[15px] text-[#111]">
      <header className="shrink-0 bg-[#303030]">
        <div className="flex h-[26px] items-center pr-[8px] pb-1 pl-[3px] text-[#d0d0d0]">
          <svg width="17" height="17" viewBox="0 0 17 17" fill="none" aria-hidden="true">
            <rect x="0" y="0" width="14" height="14" rx="2" fill="#f05a22" />
            <rect x="6.500" y="6.500" width="10" height="10" rx="2" fill="#8a3a1e" stroke="#f7b79e" strokeWidth="1.300" />
            <rect x="6.500" y="6.500" width="7" height="7" rx="1" fill="#f05a22" stroke="#fff" strokeWidth="1.200" />
          </svg>
          <span className="ml-3 flex-1">dRofus [dRofus - Demo France] 2.0.39.3844</span>
          <span>Alexia Courdurie (alexiac) - drofus-demo-fr@db2.nosyko.no</span>
          <button aria-label="Réduire" className="ml-[18px]"><svg width="9" height="9" viewBox="0 0 9 9"><path d="M0 7.500H9" stroke="#fff" strokeWidth="3" /></svg></button>
          <button aria-label="Agrandir" className="ml-[20px]"><svg width="9" height="9" viewBox="0 0 9 9" fill="none" stroke="#fff"><path d="M.5 1H8.500V8.500H.5Z" /><path d="M0 1.500H9" strokeWidth="2" /></svg></button>
          <button aria-label="Fermer" className="ml-[20px]"><svg width="12" height="11" viewBox="0 0 12 11" stroke="#e0e0e0" strokeWidth="2.400"><path d="M1 .5L11 10.500M11 .5L1 10.500" /></svg></button>
        </div>
        <div className="flex h-[22px] items-center text-white">
          {menus.map(m => (
            <button key={m} className={clsx('h-full pb-[3px]', m === 'Accueil' ? 'w-[75px]' : 'px-[13px]', m === 'Pièces' ? 'bg-[#d6d8d7] text-[#303030]' : 'font-medium')}>{m}</button>
          ))}
          <button aria-label="Replier le ruban" className="mr-[8px] ml-auto"><svg width="14" height="9" viewBox="0 0 14 9" fill="none" stroke="#fff" strokeWidth="2.200"><path d="M1 7.500L7 1.500 13 7.500" /></svg></button>
        </div>
      </header>
      <div className="flex min-h-0 flex-1">
        <SideBar />
        <div className="flex min-w-0 flex-1 flex-col">
          <Ribbon />
          <div className="flex min-h-0 flex-1">
            <div className="flex min-w-0 flex-1 gap-1 pb-[4px] pl-[5px]">
              <NavigationPanel />
              <RoomsPanel />
              <PropertiesPanel />
            </div>
            <ViewStrip />
          </div>
        </div>
      </div>
    </div>
  );
}
